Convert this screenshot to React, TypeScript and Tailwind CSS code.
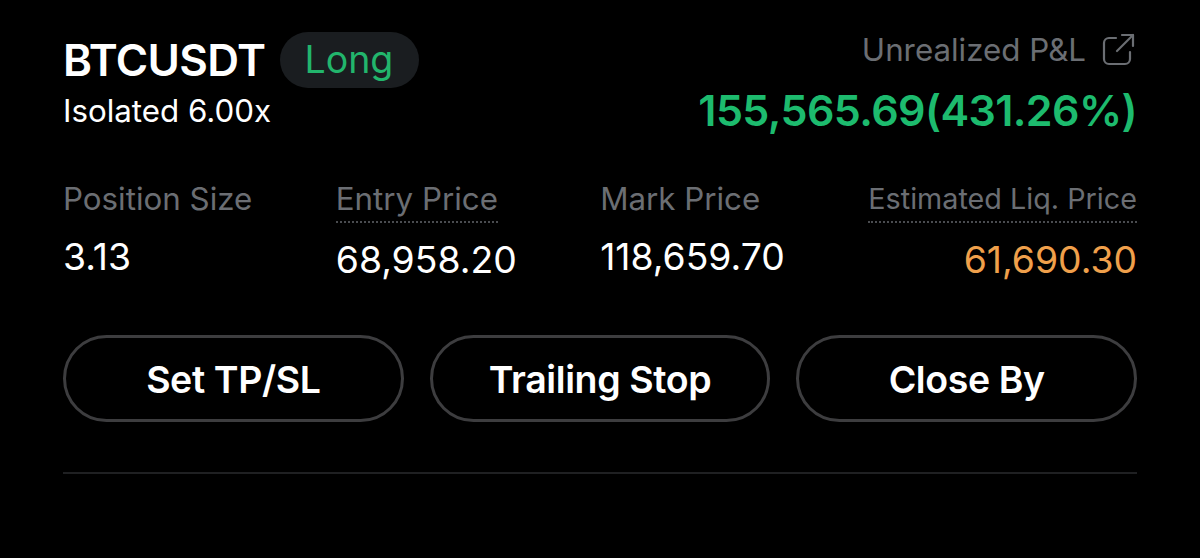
const STATS = [
  { label: 'Position Size', value: '3.13' },
  { label: 'Entry Price', value: '68,958.20', dotted: true },
  { label: 'Mark Price', value: '118,659.70' },
  { label: 'Estimated Liq. Price', value: '61,690.30', dotted: true, right: true, small: true, color: 'text-[#f0a04b]' },
]

const ACTIONS = ['Set TP/SL', 'Trailing Stop', 'Close By']

function ShareIcon() {
  return (
    <svg width="36" height="36" viewBox="0 0 36 36" fill="none" stroke="currentColor" strokeWidth="2.2" strokeLinecap="round" strokeLinejoin="round">
      <path d="M15 6H8a5 5 0 0 0-5 5v16a5 5 0 0 0 5 5h16a5 5 0 0 0 5-5v-7" />
      <path d="M16 19 32 3" />
      <path d="M21 3h11v11" />
    </svg>
  )
}

export default function App() {
  return (
    <div className="h-[558px] w-[1200px] overflow-hidden bg-black px-[63px] pt-[32px] font-['Inter',sans-serif] text-white">
      <div className="flex justify-between">
        <div>
          <div className="flex items-center gap-[15px]">
            <span className="text-[44px] leading-[56px] font-semibold tracking-[-0.66px]">BTCUSDT</span>
            <span className="flex h-[56px] items-center rounded-full bg-[#1a1d20] pt-[1px] pr-[26px] pl-[24px] text-[37.5px] text-[#22b56c]">Long</span>
          </div>
          <div className="text-[31.3px] leading-[46px]">Isolated 6.00x</div>
        </div>
        <div className="flex flex-col items-end">
          <div className="flex h-[36px] items-center gap-[15px] text-[#6b6e73]">
            <span className="text-[31.3px]">Unrealized P&amp;L</span>
            <ShareIcon />
          </div>
          <div className="mt-[14px] text-[43px] leading-[56px] font-semibold tracking-[-0.6px] text-[#1dbb6e]">155,565.69(431.26%)</div>
        </div>
      </div>

      <div className="mt-[41px] flex justify-between">
        {STATS.map((s) => (
          <div key={s.label} className={s.right ? 'flex flex-col items-end' : 'flex flex-col items-start'}>
            <div
              className={`leading-[40px] text-[#6b6e73] ${s.small ? 'text-[28.75px]' : 'text-[31.3px]'} ${
                s.dotted ? 'border-b-2 border-dotted border-[#4a4c50] pb-[2px]' : ''
              }`}
            >
              {s.label}
            </div>
            <div className={`${s.dotted ? 'mt-[17px]' : 'mt-[18px]'} text-[37.3px] leading-[40px] ${s.color || 'text-white'}`}>{s.value}</div>
          </div>
        ))}
      </div>

      <div className="mt-[55px] flex gap-[26px]">
        {ACTIONS.map((a) => (
          <button
            key={a}
            className="h-[87px] flex-1 rounded-full border-[3px] border-[#3d3d3f] pt-[3px] text-[37.5px] font-semibold tracking-[-0.4px] text-white"
          >
            {a}
          </button>
        ))}
      </div>

      <div className="mt-[50px] h-[2px] bg-[#1f2022]" />
    </div>
  )
}
